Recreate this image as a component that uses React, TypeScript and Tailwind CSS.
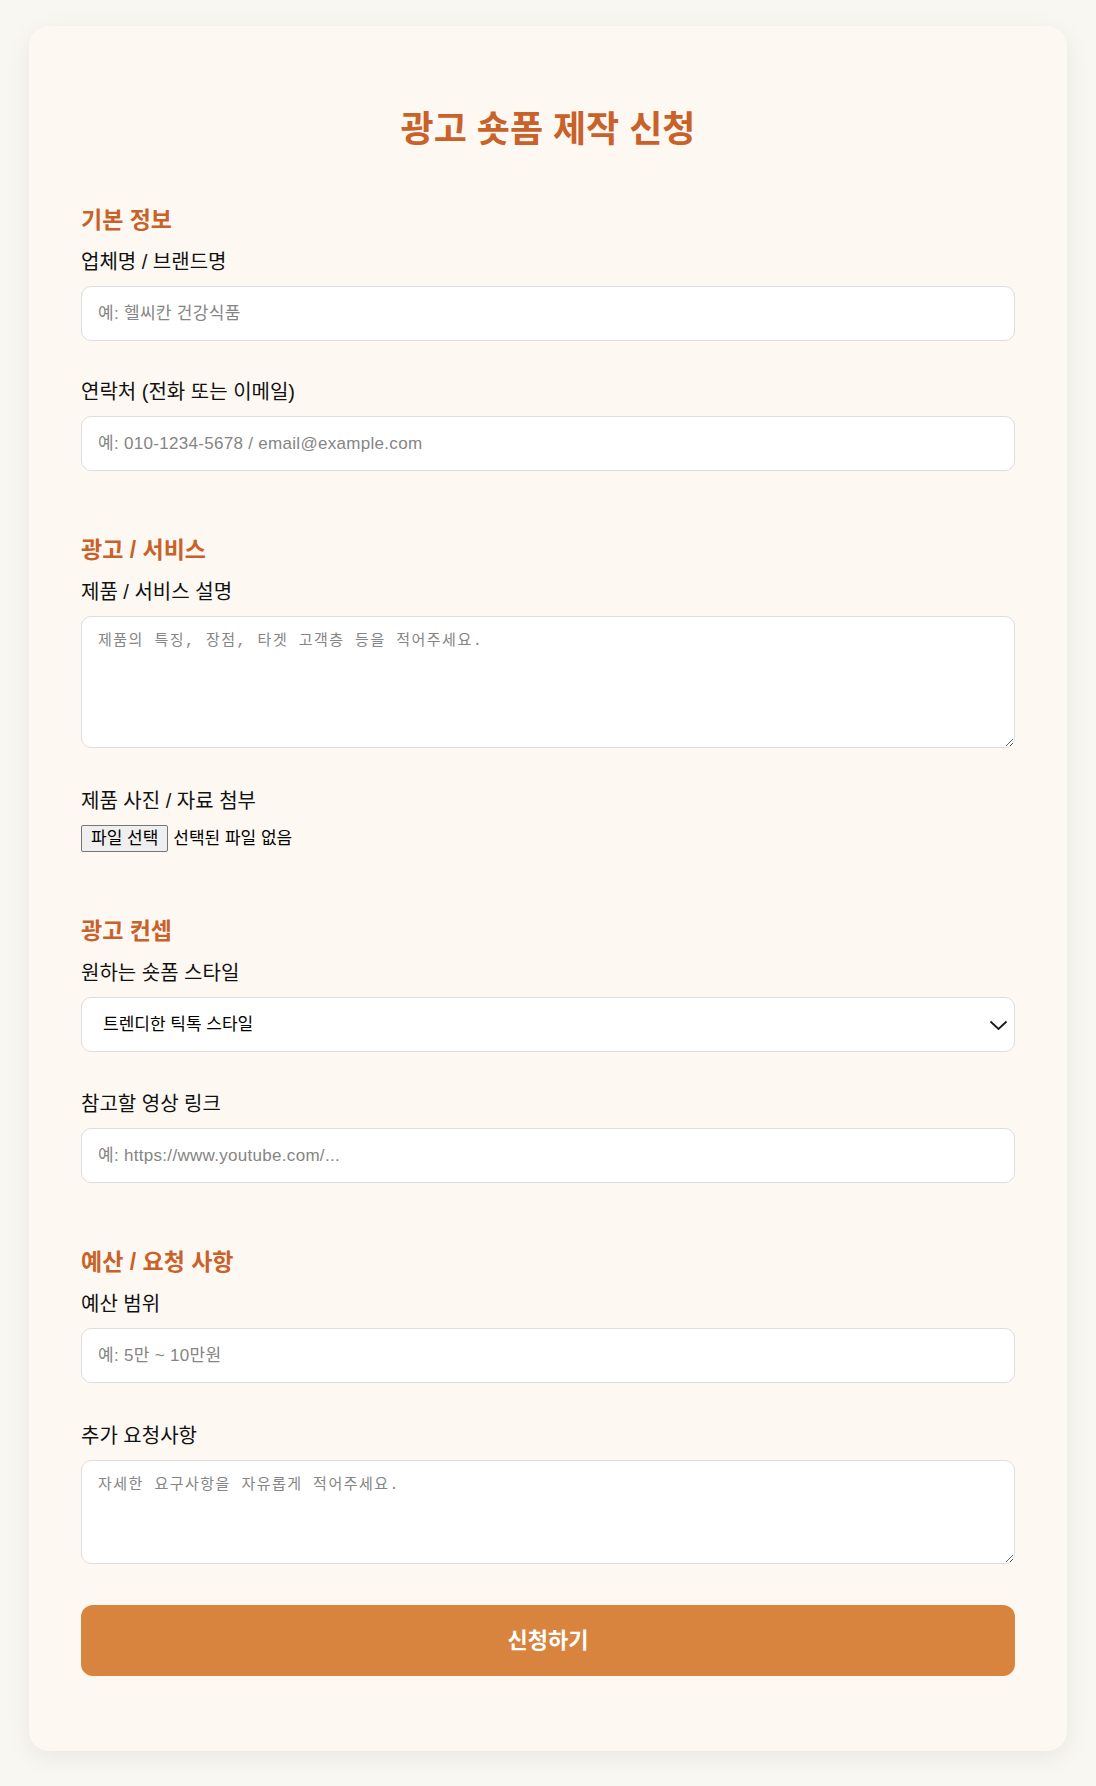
import { useState } from 'react'

const font = "font-['Liberation_Sans','Noto_Sans_CJK_KR',sans-serif]"

function SectionTitle({ children, first }: { children: string; first?: boolean }) {
	return (
		<h2
			className={`${first ? 'mt-[55px]' : 'mt-[64px]'} mb-[13px] text-[23px] leading-[30px] font-bold text-[#c8612a]`}
		>
			{children}
		</h2>
	)
}

function Label({ children }: { children: string }) {
	return <label className="mb-[11px] block pt-[1px] text-[20px] leading-[26px] font-normal text-[#111]">{children}</label>
}

function TextInput({ placeholder }: { placeholder: string }) {
	return (
		<input
			type="text"
			placeholder={placeholder}
			className="block h-[55px] w-full rounded-[10px] border border-[#dddddd] bg-white px-[16px] text-[17px] tracking-[0.3px] text-[#222] outline-none placeholder:text-[#858585]"
		/>
	)
}

function Area({ placeholder, h }: { placeholder: string; h: string }) {
	return (
		<textarea
			placeholder={placeholder}
			className={`block w-full rounded-[10px] border border-[#dddddd] bg-white px-[16px] py-[15px] font-['Liberation_Mono','Noto_Sans_CJK_KR',monospace] text-[15px] leading-[20px] tracking-[1.5px] text-[#222] outline-none placeholder:text-[#858585] ${h}`}
		/>
	)
}

export default function App() {
	const [style, setStyle] = useState('tiktok')

	return (
		<div className={`min-h-screen bg-[#f9f7f2] py-[26px] ${font}`}>
			<form
				className="mx-auto w-[1038px] rounded-[20px] bg-[#fdf8f1] px-[52px] pt-[84px] pb-[75px] shadow-[0_6px_24px_rgba(0,0,0,0.07)]"
				onSubmit={(e) => e.preventDefault()}
			>
				<h1 className="text-center text-[36px] leading-[40px] font-bold text-[#c8612a]">광고 숏폼 제작 신청</h1>

				<SectionTitle first>기본 정보</SectionTitle>
				<Label>업체명 / 브랜드명</Label>
				<TextInput placeholder="예: 헬씨칸 건강식품" />
				<div className="mt-[37px]">
					<Label>연락처 (전화 또는 이메일)</Label>
					<TextInput placeholder="예: 010-1234-5678 / email@example.com" />
				</div>

				<SectionTitle>광고 / 서비스</SectionTitle>
				<Label>제품 / 서비스 설명</Label>
				<Area placeholder="제품의 특징, 장점, 타겟 고객층 등을 적어주세요." h="h-[132px]" />
				<div className="mt-[39px]">
					<Label>제품 사진 / 자료 첨부</Label>
					<div className="flex items-center gap-[5px] text-[17px] text-black">
						<button
							type="button"
							className="h-[27px] rounded-[2px] border border-[#767676] bg-[#efefef] px-[9px] text-[17px] leading-none"
						>
							파일 선택
						</button>
						<span>선택된 파일 없음</span>
					</div>
				</div>

				<SectionTitle>광고 컨셉</SectionTitle>
				<Label>원하는 숏폼 스타일</Label>
				<div className="relative">
					<select
						value={style}
						onChange={(e) => setStyle(e.target.value)}
						className="block h-[55px] w-full appearance-none rounded-[10px] border border-[#dddddd] bg-white pr-[48px] pl-[21px] text-[17px] text-black outline-none"
					>
						<option value="tiktok">트렌디한 틱톡 스타일</option>
						<option value="review">리뷰형 스타일</option>
						<option value="info">정보 전달형</option>
					</select>
					<svg
						className="pointer-events-none absolute top-1/2 right-[7px] h-[12px] w-[19px] -translate-y-1/2"
						viewBox="0 0 19 12"
						fill="none"
						stroke="#1a1a1a"
						strokeWidth="1.8"
					>
						<path d="M1.5 2.5 L9.5 10 L17.5 2.5" />
					</svg>
				</div>
				<div className="mt-[38px]">
					<Label>참고할 영상 링크</Label>
					<TextInput placeholder="예: https://www.youtube.com/..." />
				</div>

				<SectionTitle>예산 / 요청 사항</SectionTitle>
				<Label>예산 범위</Label>
				<TextInput placeholder="예: 5만 ~ 10만원" />
				<div className="mt-[39px]">
					<Label>추가 요청사항</Label>
					<Area placeholder="자세한 요구사항을 자유롭게 적어주세요." h="h-[104px]" />
				</div>

				<button
					type="submit"
					className="mt-[41px] h-[71px] w-full rounded-[12px] bg-[#d9843e] text-[22px] font-bold text-white"
				>
					신청하기
				</button>
			</form>
		</div>
	)
}
